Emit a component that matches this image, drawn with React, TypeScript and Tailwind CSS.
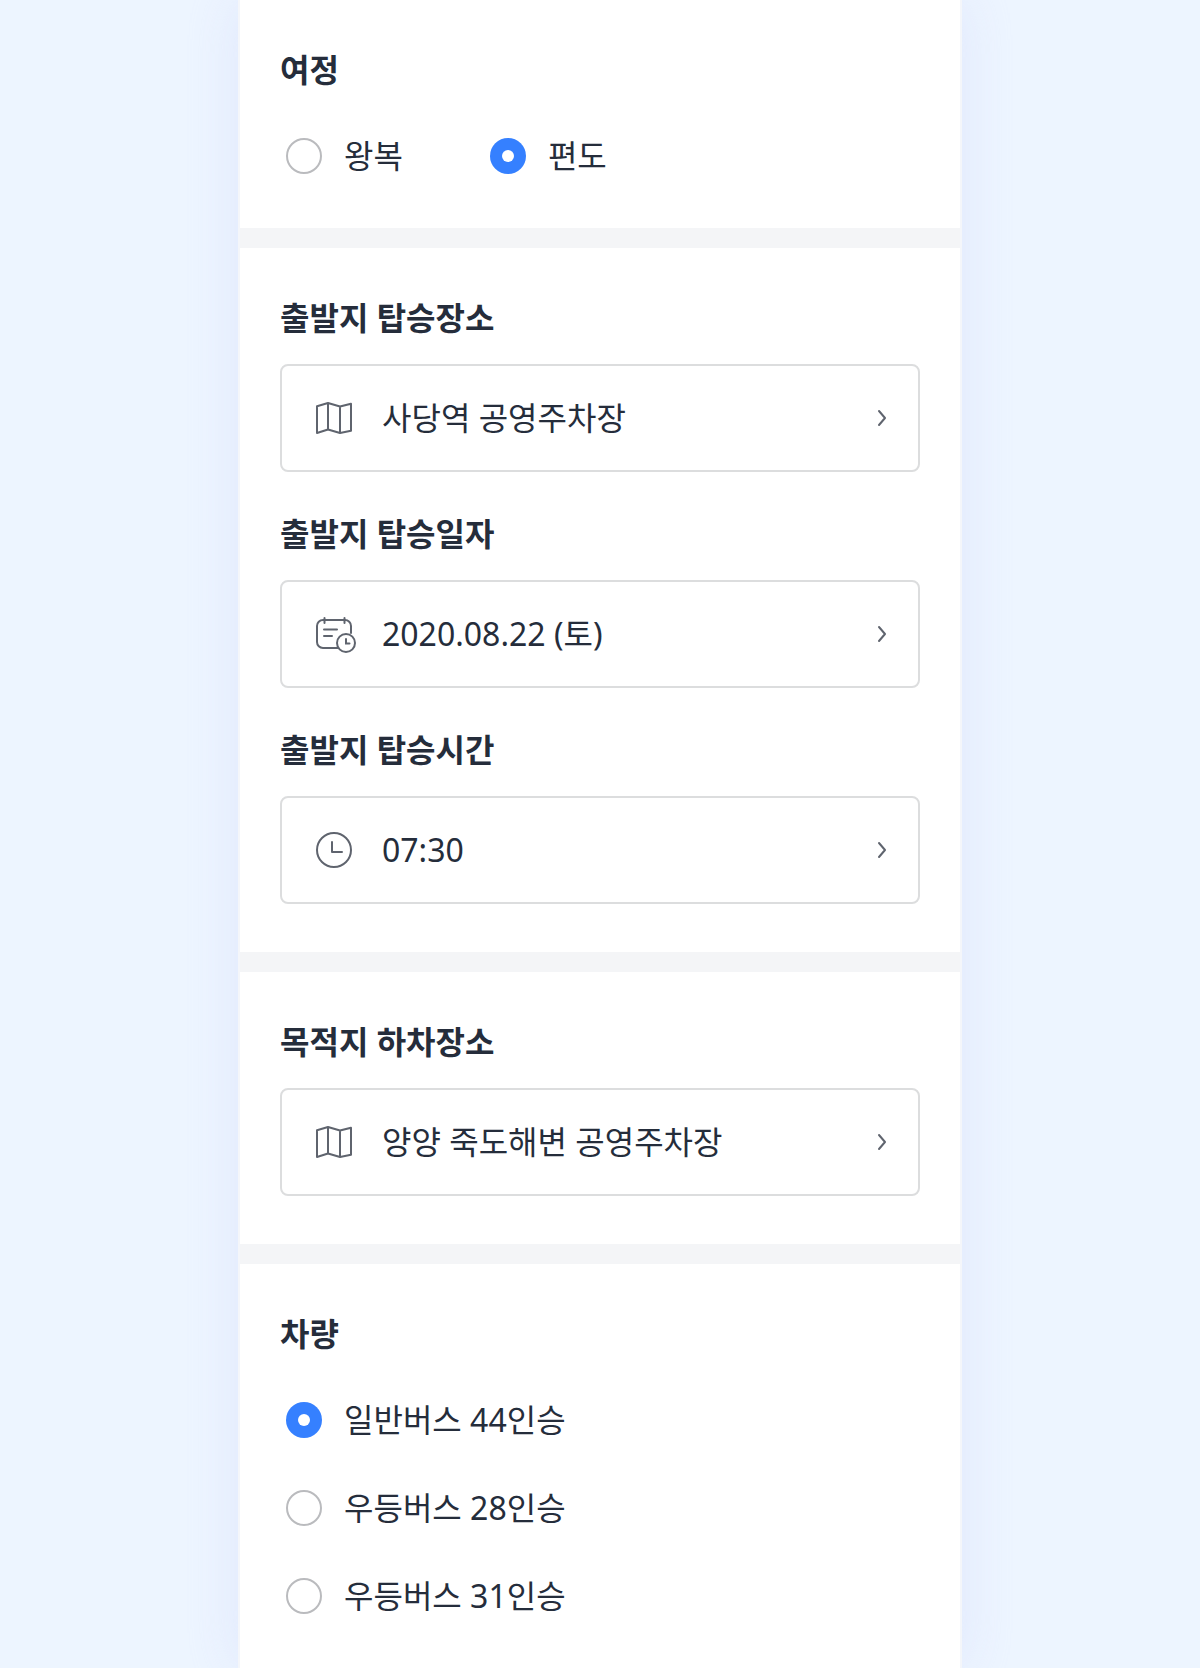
import type { ReactNode } from "react";

const MapIcon = () => (
  <svg className="h-10 w-11 text-[#5f646e]" viewBox="0 0 44 40" fill="none" stroke="currentColor" strokeWidth="2" strokeLinejoin="round">
    <path d="M3 8.200 14 5l12 3.500 11-2.700v27L26 35l-12-3.500-11 3.500zM14 5v26.500M26 8.500V35" />
  </svg>
);

const CalendarIcon = () => (
  <svg className="h-10 w-11 text-[#5f646e]" viewBox="0 0 44 40" fill="none" stroke="currentColor" strokeWidth="2" strokeLinecap="round">
    <path d="M24 34H9a6 6 0 0 1-6-6V12a6 6 0 0 1 6-6h22a6 6 0 0 1 6 6v7" />
    <path d="M10.500 4v5M30.500 4v5M10 15.500h13M10 22h8" />
    <circle cx="32" cy="29" r="9" />
    <path d="M32 25v4.500h3.500" />
  </svg>
);

const ClockIcon = () => (
  <svg className="h-10 w-11 text-[#5f646e]" viewBox="0 0 44 40" fill="none" stroke="currentColor" strokeWidth="2" strokeLinecap="round" strokeLinejoin="round">
    <circle cx="20" cy="20" r="17" />
    <path d="M18 12v10h10" />
  </svg>
);

const Title = ({ children }: { children: ReactNode }) => (
  <h2 className="h-12 text-[32px] leading-[48px] font-bold">{children}</h2>
);

type FieldProps = {
  title: string;
  value: string;
  icon: ReactNode;
};

const Field = ({ title, value, icon }: FieldProps) => (
  <div>
    <Title>{title}</Title>
    <button
      type="button"
      className="mt-[22px] flex h-[108px] w-full items-center rounded-lg border-2 border-[#dcddde] pr-[30px] pl-8 text-left"
    >
      {icon}
      <span className="ml-6 flex-1 text-[32px] leading-[48px]">{value}</span>
      <svg className="h-5 w-3 text-[#5f646e]" viewBox="0 0 12 20" fill="none" stroke="currentColor" strokeWidth="2" strokeLinecap="round" strokeLinejoin="round">
        <path d="M3 3l6 7-6 7" />
      </svg>
    </button>
  </div>
);

const Radio = ({ label, checked = false }: { label: string; checked?: boolean }) => (
  <div className="flex items-center gap-[22px]">
    {checked ? (
      <span className="flex size-9 items-center justify-center rounded-full bg-[#3580ff]">
        <span className="size-3 rounded-full bg-white" />
      </span>
    ) : (
      <span className="size-9 rounded-full border-2 border-[#babbbe]" />
    )}
    <span className="text-[32px] leading-10">{label}</span>
  </div>
);

const Divider = () => <div className="h-5 bg-[#f4f5f7]" />;

const App = () => {
  return (
    <div className="flex h-[1668px] justify-center overflow-hidden bg-[#edf5ff] font-['Noto_Sans','Noto_Sans_CJK_KR',sans-serif] text-[#252d3b]">
      <main className="w-[724px] border-x-2 border-[#f4f6fa] bg-white shadow-[0_0_50px_rgba(215,222,250,0.6)]">
        <section className="h-[228px] px-10 pt-[46px]">
          <Title>여정</Title>
          <div className="mt-[42px] flex gap-[87px] pl-1.5">
            <Radio label="왕복" />
            <Radio label="편도" checked />
          </div>
        </section>
        <Divider />
        <section className="flex flex-col gap-[38px] px-10 pt-[46px] pb-12">
          <Field title="출발지 탑승장소" value="사당역 공영주차장" icon={<MapIcon />} />
          <Field title="출발지 탑승일자" value="2020.08.22 (토)" icon={<CalendarIcon />} />
          <Field title="출발지 탑승시간" value="07:30" icon={<ClockIcon />} />
        </section>
        <Divider />
        <section className="px-10 pt-[46px] pb-12">
          <Field title="목적지 하차장소" value="양양 죽도해변 공영주차장" icon={<MapIcon />} />
        </section>
        <Divider />
        <section className="px-10 pt-[46px]">
          <Title>차량</Title>
          <div className="mt-[42px] flex flex-col gap-12 pl-1.5">
            <Radio label="일반버스 44인승" checked />
            <Radio label="우등버스 28인승" />
            <Radio label="우등버스 31인승" />
          </div>
        </section>
      </main>
    </div>
  );
};

export default App;
